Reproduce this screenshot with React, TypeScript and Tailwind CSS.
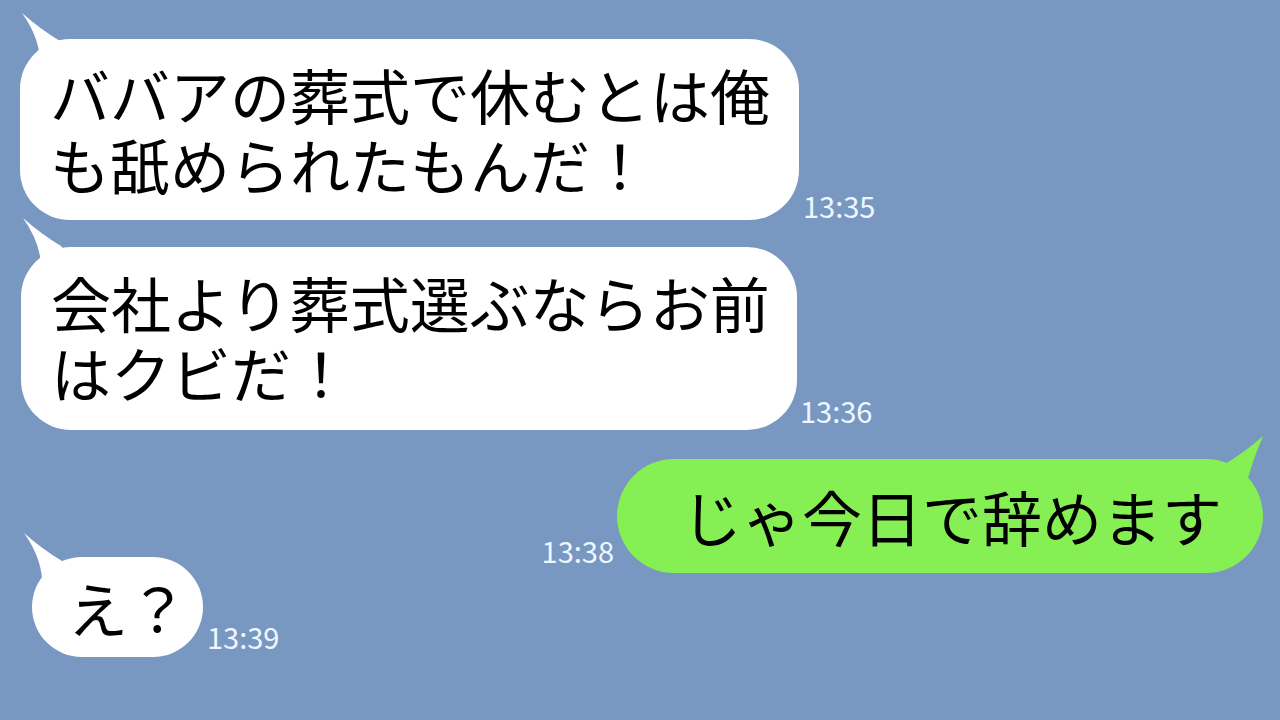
const jp = { fontFamily: '"Noto Sans CJK JP", "Noto Sans", sans-serif' };

function TailLeft({ className }: { className: string }) {
  return (
    <svg className={`absolute ${className}`} width="60" height="60" viewBox="0 0 60 60">
      <path d="M2 2 Q22 30 20 58 L56 50 L40 30 Q20 18 2 2 Z" fill="#ffffff" />
    </svg>
  );
}

function Stamp({ t, className }: { t: string; className: string }) {
  return (
    <span className={`text-[29px] leading-none text-[#eef7ff] ${className}`} style={jp}>
      {t}
    </span>
  );
}

export default function App() {
  return (
    <div className="w-[1280px] h-[720px] bg-[#7897c1] overflow-hidden flex flex-col text-black" style={jp}>
      {/* 1 */}
      <div className="flex items-end mt-[39px] pl-[20px]">
        <div className="relative w-[779px] h-[181px]">
          <TailLeft className="left-[0px] top-[-28px]" />
          <div className="relative w-full h-full bg-white rounded-[50px] pl-[30px] pt-[20px] text-[60px] leading-[70px] whitespace-nowrap">
            <div className="h-[70px]">ババアの葬式で休むとは俺</div>
            <div className="h-[70px]">も舐められたもんだ！</div>
          </div>
        </div>
        <Stamp t="13:35" className="ml-[4px]" />
      </div>

      {/* 2 */}
      <div className="flex items-end mt-[27px] pl-[21px]">
        <div className="relative w-[776px] h-[183px]">
          <TailLeft className="left-[0px] top-[-31px]" />
          <div className="relative w-full h-full bg-white rounded-[50px] pl-[30px] pt-[20px] text-[60px] leading-[70px] whitespace-nowrap">
            <div className="h-[70px]">会社より葬式選ぶならお前</div>
            <div className="h-[70px]">はクビだ！</div>
          </div>
        </div>
        <Stamp t="13:36" className="ml-[3px] mb-[5px]" />
      </div>

      {/* 3 */}
      <div className="flex items-end justify-end mt-[29px] pr-[17px]">
        <Stamp t="13:38" className="mr-[3px] mb-[8px]" />
        <div className="relative w-[646px] h-[114px]">
          <svg className="absolute right-[-2px] top-[-25px]" width="60" height="60" viewBox="0 0 60 60">
            <path d="M58 2 Q40 18 20 30 L4 50 L40 56 Q46 30 58 2 Z" fill="#86ef54" />
          </svg>
          <div className="relative w-full h-full bg-[#86ef54] rounded-[57px] pl-[65px] flex items-center text-[60px] leading-none whitespace-nowrap">
            じゃ今日で辞めます
          </div>
        </div>
      </div>

      {/* 4 */}
      <div className="flex items-end mt-[-16px] pl-[32px]">
        <div className="relative w-[171px] h-[100px]">
          <TailLeft className="left-[-10px] top-[-26px]" />
          <div className="relative w-full h-full bg-white rounded-[50px] pl-[36px] flex items-center text-[60px] leading-none whitespace-nowrap">
            え？
          </div>
        </div>
        <Stamp t="13:39" className="ml-[4px] mb-[6px]" />
      </div>
    </div>
  );
}
